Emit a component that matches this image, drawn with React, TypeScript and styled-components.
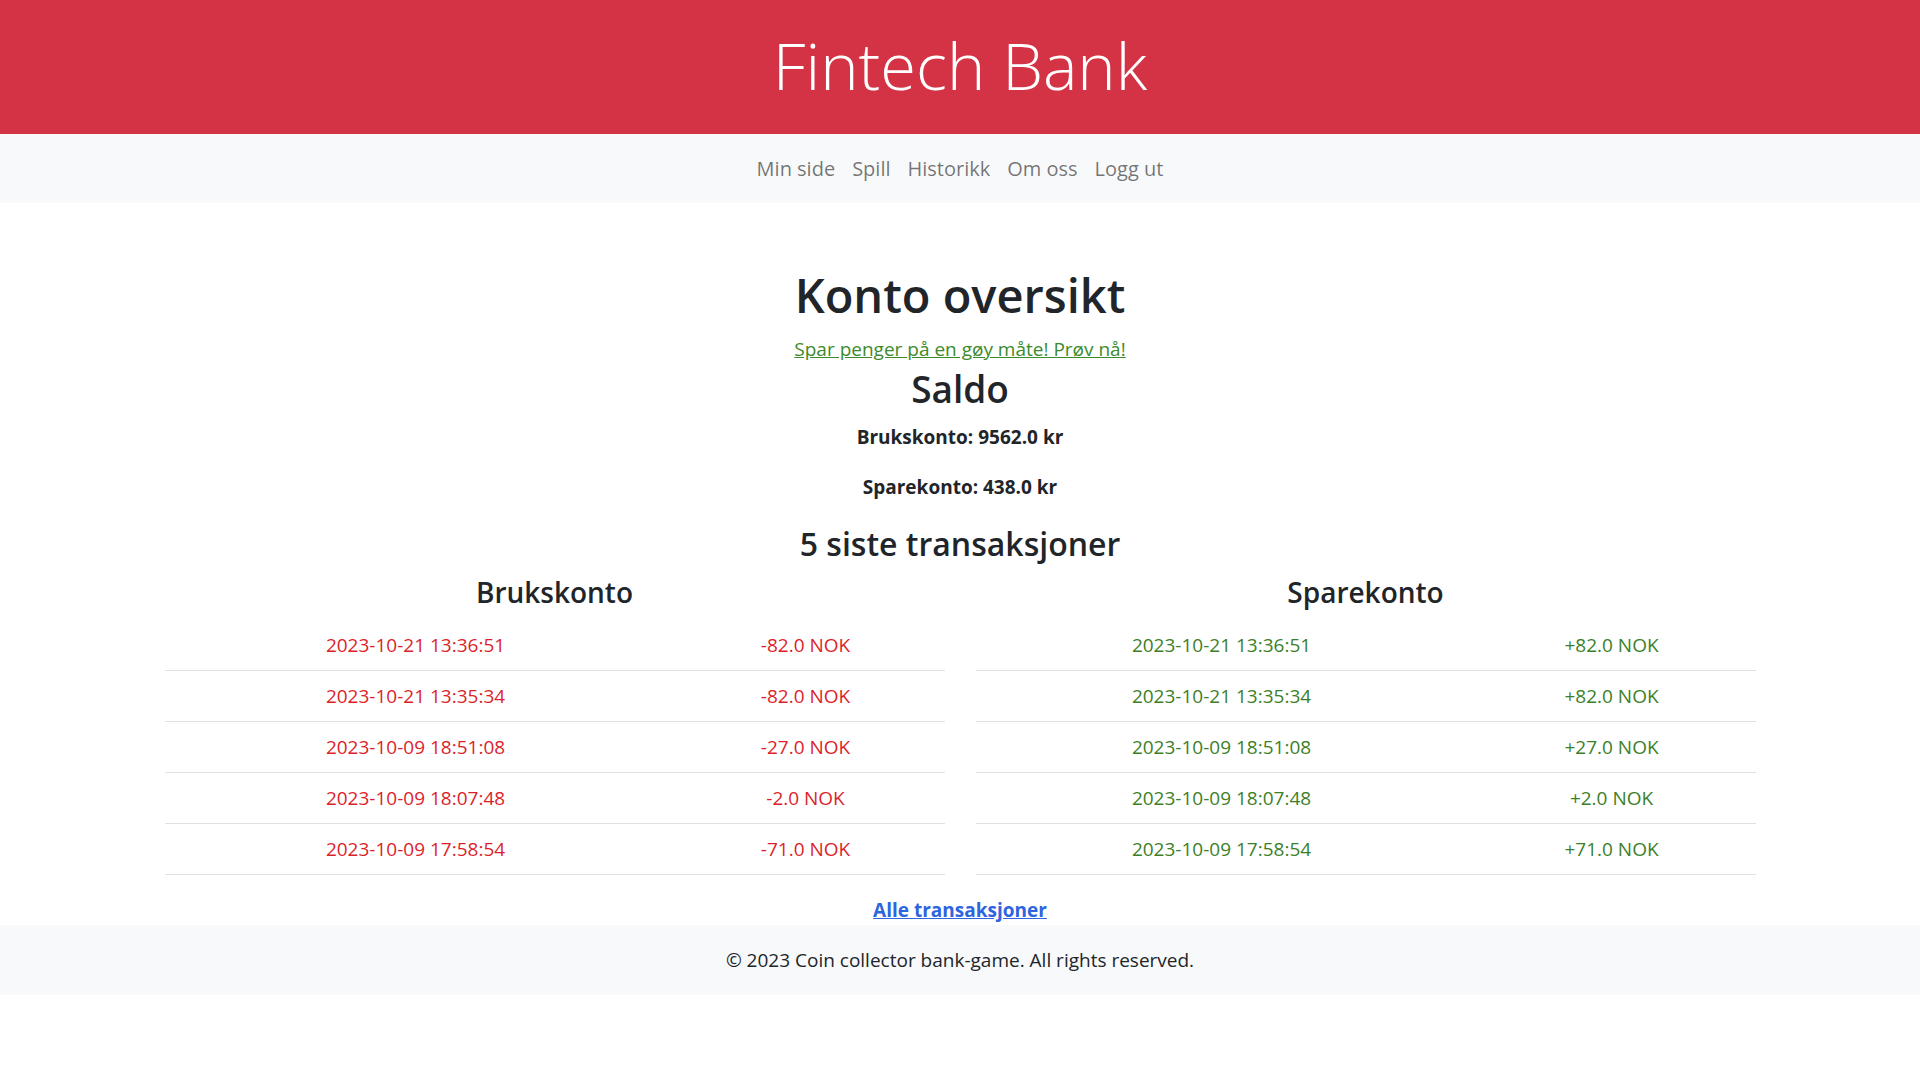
import styled, { createGlobalStyle } from 'styled-components';

const GlobalStyle = createGlobalStyle`
  body {
    margin: 0;
    font-family: "Open Sans", "Noto Sans", "Liberation Sans", sans-serif;
    color: #212529;
    background: #ffffff;
  }
`;

const Banner = styled.header`
  background-color: #d33344;
  height: 134px;
  display: flex;
  align-items: center;
  justify-content: center;
`;

const BrandTitle = styled.h1`
  margin: 0 0 4px;
  color: #ffffff;
  font-weight: 300;
  font-size: 65px;
  line-height: 1.2;
`;

const NavBar = styled.nav`
  background-color: #f8f9fa;
  height: 69px;
  display: flex;
  align-items: center;
  justify-content: center;
  gap: 17px;
`;

const NavLink = styled.a`
  color: rgba(0, 0, 0, 0.55);
  font-size: 20px;
  text-decoration: none;
  cursor: pointer;
`;

const Main = styled.main`
  display: flex;
  flex-direction: column;
  align-items: center;
  text-align: center;
  padding-top: 62px;
`;

const PageTitle = styled.h1`
  margin: 0;
  font-size: 47px;
  font-weight: 560;
  line-height: 60px;
`;

const PromoLink = styled.a`
  margin-top: 9px;
  color: #3d8a2c;
  font-size: 19px;
  line-height: 30px;
  text-decoration: underline;
`;

const SectionTitle = styled.h2<{ $size: number; $line: number; $top: number }>`
  margin: ${(p) => p.$top}px 0 0;
  font-size: ${(p) => p.$size}px;
  line-height: ${(p) => p.$line}px;
  font-weight: 560;
`;

const Balance = styled.p<{ $top: number }>`
  margin: ${(p) => p.$top}px 0 0;
  font-size: 19px;
  line-height: 30px;
  font-weight: 700;
`;

const TableGrid = styled.div`
  display: grid;
  grid-template-columns: 780px 780px;
  column-gap: 31px;
`;

const Column = styled.section`
  display: flex;
  flex-direction: column;
`;

const ColumnTitle = styled.h3`
  margin: 11px 0 0;
  font-size: 28px;
  line-height: 34px;
  font-weight: 560;
`;

const TxTable = styled.table<{ $first: number }>`
  margin-top: 11px;
  width: 100%;
  border-collapse: collapse;
  table-layout: fixed;

  col:first-child {
    width: ${(p) => p.$first}px;
  }
`;

const TxRow = styled.tr`
  border-bottom: 1px solid #dee2e6;
`;

const TxCell = styled.td<{ $tone: 'neg' | 'pos' }>`
  padding: 10px 8px;
  font-size: 19px;
  line-height: 30px;
  text-align: center;
  color: ${(p) => (p.$tone === 'neg' ? '#dc1f2b' : '#3d7f28')};
`;

const AllLink = styled.a`
  margin-top: 20px;
  font-size: 19px;
  line-height: 30px;
  font-weight: 700;
  color: #2d64e0;
  text-decoration: underline;
`;

const Footer = styled.footer`
  background-color: #f8f9fa;
  height: 70px;
  display: flex;
  align-items: center;
  justify-content: center;
  font-size: 19px;
  color: #212529;
`;

type Tx = { date: string; amount: number };

const transactions: Tx[] = [
  { date: '2023-10-21 13:36:51', amount: 82 },
  { date: '2023-10-21 13:35:34', amount: 82 },
  { date: '2023-10-09 18:51:08', amount: 27 },
  { date: '2023-10-09 18:07:48', amount: 2 },
  { date: '2023-10-09 17:58:54', amount: 71 },
];

const TxList = ({ title, tone, first }: { title: string; tone: 'neg' | 'pos'; first: number }) => (
  <Column>
    <ColumnTitle>{title}</ColumnTitle>
    <TxTable $first={first}>
      <colgroup>
        <col />
        <col />
      </colgroup>
      <tbody>
        {transactions.map((t) => (
          <TxRow key={t.date}>
            <TxCell $tone={tone}>{t.date}</TxCell>
            <TxCell $tone={tone}>
              {tone === 'neg' ? '-' : '+'}
              {t.amount.toFixed(1)} NOK
            </TxCell>
          </TxRow>
        ))}
      </tbody>
    </TxTable>
  </Column>
);

const App = () => {
  return (
    <>
      <GlobalStyle />
      <Banner>
        <BrandTitle>Fintech Bank</BrandTitle>
      </Banner>
      <NavBar>
        <NavLink>Min side</NavLink>
        <NavLink>Spill</NavLink>
        <NavLink>Historikk</NavLink>
        <NavLink>Om oss</NavLink>
        <NavLink>Logg ut</NavLink>
      </NavBar>
      <Main>
        <PageTitle>Konto oversikt</PageTitle>
        <PromoLink href="#">Spar penger på en gøy måte! Prøv nå!</PromoLink>
        <SectionTitle $size={37} $line={48} $top={1}>
          Saldo
        </SectionTitle>
        <Balance $top={9}>Brukskonto: 9562.0 kr</Balance>
        <Balance $top={20}>Sparekonto: 438.0 kr</Balance>
        <SectionTitle $size={32} $line={41} $top={21}>
          5 siste transaksjoner
        </SectionTitle>
        <TableGrid>
          <TxList title="Brukskonto" tone="neg" first={502} />
          <TxList title="Sparekonto" tone="pos" first={492} />
        </TableGrid>
        <AllLink href="#">Alle transaksjoner</AllLink>
      </Main>
      <Footer>© 2023 Coin collector bank-game. All rights reserved.</Footer>
    </>
  );
};

export default App;
